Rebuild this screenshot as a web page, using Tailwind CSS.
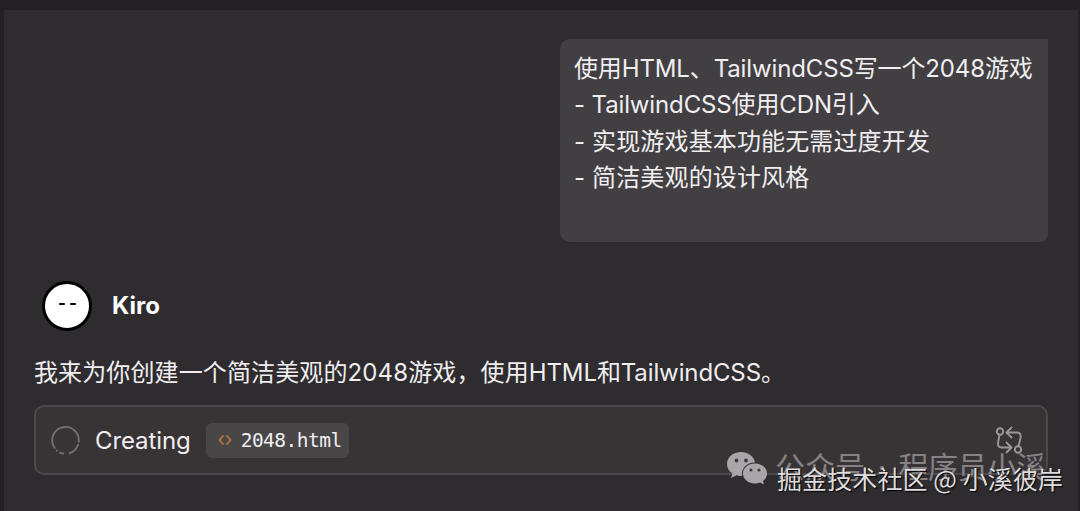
<!DOCTYPE html>
<html lang="zh-CN">
  <head>
    <meta charset="UTF-8" />
    <meta name="viewport" content="width=device-width, initial-scale=1.0" />
    <title>Kiro</title>
    <script src="https://cdn.jsdelivr.net/npm/@tailwindcss/browser@4"></script>
  </head>
  <body class="h-[511px] overflow-hidden bg-[#222023] pt-2.5 pl-1 pr-0.5 font-['Inter','Noto_Sans_CJK_SC',sans-serif] text-2xl text-[#f0eef0]">
    <main class="relative h-full bg-[#2e2c2f] pt-[29px] pr-[30px] pl-[30px]">
      <!-- User message -->
      <div class="ml-auto h-[203px] w-[488px] rounded-l-[10px] rounded-br-[8px] bg-[#423f42] pt-3 pl-[14px] leading-[36.3px] whitespace-nowrap">
        <p class="tracking-[-0.13px]">使用HTML、TailwindCSS写一个2048游戏</p>
        <p class="tracking-[-0.13px]">- TailwindCSS使用CDN引入</p>
        <p class="tracking-[0.14px]">- 实现游戏基本功能无需过度开发</p>
        <p class="tracking-[0.14px]">- 简洁美观的设计风格</p>
      </div>

      <!-- Assistant header -->
      <div class="mt-[39px] flex h-[49px] items-center pl-2">
        <div class="flex size-[50px] items-center justify-center gap-[5px] rounded-full border-3 border-black bg-white">
          <span class="-mt-1 h-[2px] w-[6px] rounded-full bg-black"></span>
          <span class="-mt-1 h-[2px] w-[6px] rounded-full bg-black"></span>
        </div>
        <h2 class="ml-5 text-[24px] font-bold text-white">Kiro</h2>
      </div>

      <p class="mt-[25px] h-[36px] leading-[36px] whitespace-nowrap"><span class="tracking-[0.12px]">我来为你创建一个简洁美观的2048游戏，使用</span><span class="tracking-[-0.12px]">HTML和TailwindCSS。</span></p>

      <!-- Tool call -->
      <div class="mt-[14px] flex h-[70px] w-[1014px] items-center rounded-[10px] border-2 border-[#4c494c] bg-[#383436] pl-[15px] pr-[23px]">
        <svg class="size-[29px] text-[#747174]" viewBox="0 0 29 29" fill="none" stroke="currentColor" stroke-width="1.8">
          <path d="M4 22.5A13.3 13.3 0 1 1 27.6 16.5" />
          <path d="M27.3 18A13.3 13.3 0 0 1 18 27.3" />
          <path d="M13 27.7A13.3 13.3 0 0 1 8.5 26.4" />
          <path d="M6.5 25.2L5 23.8" />
        </svg>
        <span class="ml-[15px] pt-0.5 tracking-[-0.1px]">Creating</span>
        <div class="ml-[15px] flex h-[35px] w-[143px] items-center rounded-md bg-[#494648] pl-3">
          <svg class="h-3 w-[14px] text-[#c4703a]" viewBox="0 0 14 12" fill="none" stroke="currentColor" stroke-width="1.8">
            <path d="M5.5 1.5L1.5 6L5.5 10.5M8.5 1.5L12.5 6L8.5 10.5" />
          </svg>
          <span class="ml-[9px] pt-px font-['DejaVu_Sans_Mono',monospace] text-[19.5px] tracking-[-0.5px]">2048.html</span>
        </div>
        <svg class="ml-auto size-7 text-[#9a979a]" viewBox="0 0 28 28" fill="none" stroke="currentColor" stroke-width="1.9" stroke-linejoin="round">
          <circle cx="5" cy="5.5" r="3.2" />
          <circle cx="23" cy="23.5" r="3.2" />
          <path d="M4.500 8.700L3 17Q2.500 21.500 6.500 21.500H16M11 16L16.500 21.500L11 27" />
          <path d="M23.500 20.300L25.500 12Q26.500 6.500 22 6.500H12M17 1L11.500 6.500L17 12" />
        </svg>
      </div>

      <!-- Watermarks -->
      <svg class="absolute top-[441px] left-[722px] h-[34px] w-[42px]" viewBox="0 0 42 34">
        <path fill="#aaa5a8" d="M15 1C7 1 1 6.300 1 13C1 17 3 20.300 6.500 22.500L5 27L10.500 24.300Q13 25 16 24.900C15 18 20 11.500 29 11.500C28 5.500 22 1 15 1Z" />
        <path fill="#aaa5a8" d="M29 12.500C22 12.500 17 17 17 22.500C17 28 22 32.500 29 32.500Q31.500 32.500 34 31.500L38 33.500L37 30C39.500 28 41 25.500 41 22.500C41 17 36 12.500 29 12.500Z" />
        <g fill="#403b3f">
          <circle cx="10.500" cy="9.500" r="1.900" />
          <circle cx="20" cy="9.500" r="1.900" />
          <circle cx="25" cy="19" r="1.600" />
          <circle cx="33" cy="19" r="1.600" />
        </g>
      </svg>
      <div class="absolute top-[439px] left-[771px] text-[30px] leading-9 whitespace-nowrap text-[#858184]">公众号<span class="mx-1"> · </span><span class="tracking-[-0.5px]">程序员小溪</span></div>
      <div class="absolute top-[450px] left-[773px] font-['Noto_Sans_CJK_SC',sans-serif] text-[25px] leading-9 tracking-[0.1px] whitespace-nowrap text-[#dedcde] [text-shadow:1px_1px_1px_#000]">掘金技术社区 @ 小溪彼岸</div>
    </main>
  </body>
</html>
